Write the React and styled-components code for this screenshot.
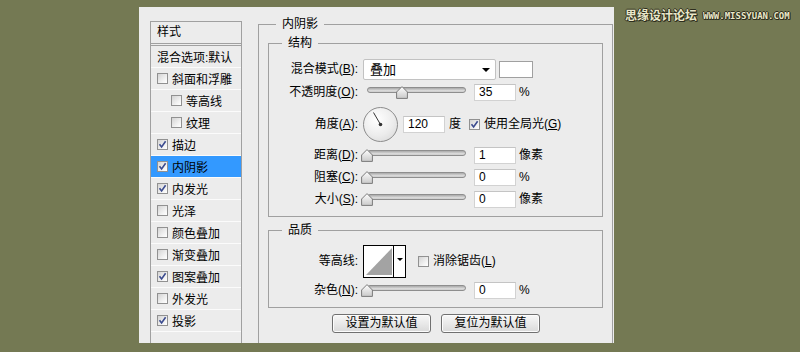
import React from "react";
import styled, { createGlobalStyle } from "styled-components";

const Global = createGlobalStyle`
  html, body { margin: 0; padding: 0; background: #747953; overflow: hidden; }
  * { box-sizing: border-box; }
`;

const FONT = `"Liberation Sans", "Noto Sans CJK SC", sans-serif`;

const Page = styled.div`
  position: relative;
  width: 800px;
  height: 352px;
  padding: 7px 0 0 139px;
  overflow: hidden;
  font-family: ${FONT};
  font-size: 12px;
  color: #000;
`;

const Panel = styled.div`
  width: 475px;
  height: 336px;
  background: #ececec;
  display: flex;
  align-items: flex-start;
  padding: 9px 0 0 11px;
  overflow: hidden;
`;

const List = styled.div`
  flex-shrink: 0;
  width: 92px;
  height: 340px;
  margin-top: 5px;
  border: 1px solid #a0a0a0;
  border-bottom: none;
  overflow: hidden;
`;

const ListHeader = styled.div`
  height: 24px;
  padding: 3px 0 0 6px;
  line-height: 15px;
  border-bottom: 3px double #a0a0a0;
  white-space: nowrap;
`;

const ListItem = styled.div`
  display: flex;
  align-items: center;
  gap: 4px;
  height: 22px;
  padding-left: ${(p) => (p.$indent ? 20 : 6)}px;
  border-bottom: 1px solid #fbfbfb;
  background: ${(p) => (p.$selected ? "#3399ff" : "transparent")};
  white-space: nowrap;
  overflow: hidden;
`;

const Box = styled.span`
  flex-shrink: 0;
  display: inline-flex;
  align-items: center;
  justify-content: center;
  width: 11px;
  height: 11px;
  margin-left: ${(p) => p.$ml || 0}px;
  border: 1px solid #919191;
  background: linear-gradient(135deg, #d4d4d4 0%, #f4f4f4 70%, #ffffff 100%);
`;

const Check = ({ checked, ml }) => (
  <Box $ml={ml}>
    {checked && (
      <svg width="9" height="9" viewBox="0 0 9 9">
        <path d="M1.5 4.2 L3.6 7 L7.6 1.2" fill="none" stroke="#3b4b8f" strokeWidth="1.6" />
      </svg>
    )}
  </Box>
);

const Outer = styled.fieldset`
  flex-shrink: 0;
  margin: 0 0 0 16px;
  width: 355px;
  height: 340px;
  padding: 3px 9px 0 9px;
  border: 1px solid #a0a0a0;
  min-width: 0;
`;

const Legend = styled.legend`
  margin-left: ${(p) => p.$ml}px;
  padding: 0 6px;
  line-height: 16px;
  height: 16px;
  font-size: 12px;
`;

const Group = styled.fieldset`
  margin: ${(p) => p.$mt || 0}px 0 0 0;
  padding: ${(p) => p.$pt}px 0 6px 0;
  border: 1px solid #a0a0a0;
  min-width: 0;
`;

const Row = styled.div`
  display: flex;
  align-items: center;
  height: ${(p) => p.$h}px;
  white-space: nowrap;
`;

const Label = styled.div`
  width: 89px;
  text-align: right;
  flex-shrink: 0;
  line-height: 14px;
`;

const Select = styled.div`
  position: relative;
  width: 133px;
  height: 21px;
  margin-left: 5px;
  border: 1px solid #c2c2c2;
  border-radius: 2px;
  background: #fff;
  padding-left: 6px;
  line-height: 19px;
  font-size: 13px;
`;

const Arrow = styled.span`
  position: absolute;
  right: 5px;
  top: 8px;
  width: 0;
  height: 0;
  border-left: 4px solid transparent;
  border-right: 4px solid transparent;
  border-top: 4px solid #000;
`;

const Swatch = styled.div`
  width: 34px;
  height: 17px;
  margin-left: 3px;
  border: 1px solid #a0a0a0;
  background: #fff;
`;

const SliderWrap = styled.div`
  position: relative;
  width: 110px;
  height: 13px;
  margin-left: 4px;
  flex-shrink: 0;
`;

const Track = styled.div`
  margin: 1px 0 0 5px;
  width: 99px;
  height: 6px;
  border-radius: 3px;
  border: 1px solid #8e8e8e;
  background: linear-gradient(#a9a9a9, #dedede 70%, #c8c8c8);
`;

const Thumb = styled.svg`
  position: absolute;
  top: 0;
`;

const Slider = ({ value }) => (
  <SliderWrap>
    <Track />
    <Thumb width="12" height="13" viewBox="0 0 12 13" style={{ left: 5 + value * 99 - 6 }}>
      <defs>
        <linearGradient id="tg" x1="0" y1="0" x2="0" y2="1">
          <stop offset="0" stopColor="#ffffff" />
          <stop offset="1" stopColor="#c9c9c9" />
        </linearGradient>
      </defs>
      <polygon points="6,0.6 11.4,6 11.4,12.4 0.6,12.4 0.6,6" fill="url(#tg)" stroke="#7a7a7a" strokeWidth="1" />
    </Thumb>
  </SliderWrap>
);

const NumBox = styled.div`
  width: 42px;
  height: 17px;
  margin-left: ${(p) => p.$ml ?? 2}px;
  border: 1px solid #d2d2d2;
  border-top-color: #c4c4c4;
  background: #fff;
  padding-left: 4px;
  line-height: 15px;
  font-size: 12px;
  flex-shrink: 0;
`;

const Unit = styled.span`
  margin-left: ${(p) => p.$ml ?? 3}px;
  line-height: 14px;
`;

const Dial = styled.div`
  width: 35px;
  height: 35px;
  margin-left: 5px;
  border-radius: 50%;
  border: 1px solid #8c8c8c;
  background: radial-gradient(circle at 40% 35%, #ffffff 0%, #ececec 55%, #d4d4d4 100%);
  flex-shrink: 0;
`;

const Contour = styled.div`
  display: flex;
  width: 43px;
  height: 33px;
  margin-left: 5px;
  border: 1px solid #000;
  background: #fff;
  flex-shrink: 0;
`;

const ContourCurve = styled.div`
  width: 30px;
  height: 31px;
  padding: 2px;
  border-right: 1px solid #000;
`;

const ContourDrop = styled.div`
  flex: 1;
  display: flex;
  align-items: center;
  justify-content: center;
  padding-bottom: 4px;
`;

const SmallArrow = styled.span`
  width: 0;
  height: 0;
  border-left: 3px solid transparent;
  border-right: 3px solid transparent;
  border-top: 3px solid #000;
`;

const Buttons = styled.div`
  display: flex;
  gap: 10px;
  margin-top: 6px;
  padding-left: 64px;
`;

const Button = styled.div`
  width: 99px;
  height: 19px;
  border: 1px solid #707070;
  border-radius: 3px;
  background: linear-gradient(#f7f7f7, #e9e9e9 50%, #d9d9d9);
  text-align: center;
  line-height: 17px;
  font-size: 12px;
  box-shadow: inset 0 0 0 1px #fcfcfc;
`;

const Watermark = styled.div`
  position: absolute;
  top: 6px;
  left: 625px;
  display: flex;
  align-items: center;
  gap: 6px;
  color: #e9e7c9;
  text-shadow: 1px 0 0 #2d2d1e, -1px 0 0 #2d2d1e, 0 1px 0 #2d2d1e, 0 -1px 0 #2d2d1e, 1px 1px 0 #2d2d1e;
  white-space: nowrap;
`;

const WmCn = styled.span`
  font-family: "Noto Sans CJK SC", sans-serif;
  font-size: 12px;
  font-weight: 700;
  line-height: 16px;
`;

const WmEn = styled.span`
  font-family: "DejaVu Sans Mono", monospace;
  font-size: 9px;
  font-weight: 700;
  line-height: 16px;
  margin-top: 2px;
`;

const items = [
  { t: "斜面和浮雕", c: false },
  { t: "等高线", c: false, i: true },
  { t: "纹理", c: false, i: true },
  { t: "描边", c: true },
  { t: "内阴影", c: true, s: true },
  { t: "内发光", c: true },
  { t: "光泽", c: false },
  { t: "颜色叠加", c: false },
  { t: "渐变叠加", c: false },
  { t: "图案叠加", c: true },
  { t: "外发光", c: false },
  { t: "投影", c: true },
  { t: "", c: null },
];

const L = ({ text, k }) => (
  <Label>
    {text}(<u>{k}</u>):
  </Label>
);

export default function App() {
  return (
    <Page>
      <Global />
      <Panel>
        <List>
          <ListHeader>样式</ListHeader>
          <ListItem>混合选项:默认</ListItem>
          {items.map((it, idx) => (
            <ListItem key={idx} $indent={it.i} $selected={it.s}>
              {it.c !== null && <Check checked={it.c} />}
              {it.t}
            </ListItem>
          ))}
        </List>
        <Outer>
          <Legend $ml={8}>内阴影</Legend>
          <Group $pt={7}>
            <Legend $ml={13}>结构</Legend>
            <Row $h={22}>
              <L text="混合模式" k="B" />
              <Select>
                叠加
                <Arrow />
              </Select>
              <Swatch />
            </Row>
            <Row $h={24}>
              <L text="不透明度" k="O" />
              <Slider value={0.35} />
              <NumBox>35</NumBox>
              <Unit>%</Unit>
            </Row>
            <Row $h={40}>
              <L text="角度" k="A" />
              <Dial>
                <svg width="33" height="33" viewBox="0 0 33 33">
                  <line x1="16.5" y1="16.5" x2="9.5" y2="4.5" stroke="#333" strokeWidth="1" />
                  <circle cx="16.5" cy="16.5" r="1.8" fill="#333" />
                </svg>
              </Dial>
              <NumBox $ml={5}>120</NumBox>
              <Unit $ml={4}>度</Unit>
              <Check checked ml={8} />
              <Unit $ml={4}>
                使用全局光(<u>G</u>)
              </Unit>
            </Row>
            <Row $h={22}>
              <L text="距离" k="D" />
              <Slider value={0} />
              <NumBox>1</NumBox>
              <Unit>像素</Unit>
            </Row>
            <Row $h={22}>
              <L text="阻塞" k="C" />
              <Slider value={0} />
              <NumBox>0</NumBox>
              <Unit>%</Unit>
            </Row>
            <Row $h={22}>
              <L text="大小" k="S" />
              <Slider value={0} />
              <NumBox>0</NumBox>
              <Unit>像素</Unit>
            </Row>
          </Group>
          <Group $pt={5} $mt={5}>
            <Legend $ml={13}>品质</Legend>
            <Row $h={36}>
              <Label>等高线:</Label>
              <Contour>
                <ContourCurve>
                  <svg width="26" height="27" viewBox="0 0 26 27">
                    <polygon points="0,27 26,0 26,27" fill="#a3a3a3" />
                  </svg>
                </ContourCurve>
                <ContourDrop>
                  <SmallArrow />
                </ContourDrop>
              </Contour>
              <Check checked={false} ml={12} />
              <Unit $ml={4}>
                消除锯齿(<u>L</u>)
              </Unit>
            </Row>
            <Row $h={22}>
              <L text="杂色" k="N" />
              <Slider value={0} />
              <NumBox>0</NumBox>
              <Unit>%</Unit>
            </Row>
          </Group>
          <Buttons>
            <Button>设置为默认值</Button>
            <Button>复位为默认值</Button>
          </Buttons>
        </Outer>
      </Panel>
      <Watermark>
        <WmCn>思缘设计论坛</WmCn>
        <WmEn>WWW.MISSYUAN.COM</WmEn>
      </Watermark>
    </Page>
  );
}
